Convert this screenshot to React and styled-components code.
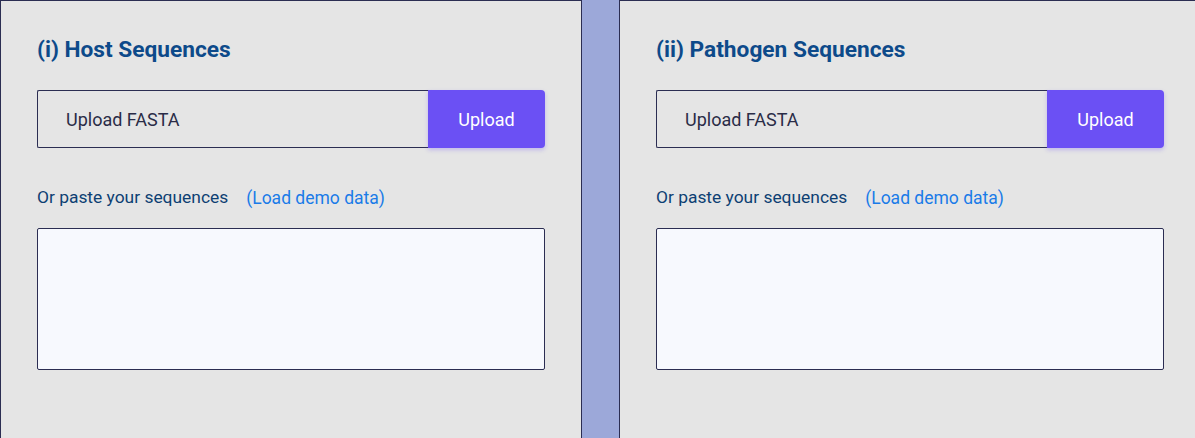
import React from "react";
import styled, { createGlobalStyle } from "styled-components";

const GlobalStyle = createGlobalStyle`
  html, body {
    margin: 0;
    padding: 0;
    overflow: hidden;
    background: #9ca8d9;
    font-family: Roboto, "Liberation Sans", sans-serif;
  }
`;

const Page = styled.div`
  display: flex;
  gap: 37px;
  width: 1240px;
`;

const Panel = styled.section`
  box-sizing: border-box;
  width: 582px;
  height: 480px;
  flex-shrink: 0;
  background: #e5e5e5;
  border: 1px solid #2b2d52;
  padding: 29px 36px 0 36px;
`;

const Title = styled.h2`
  margin: 0 0 20px;
  font-size: 22.7px;
  font-weight: 700;
  line-height: 40px;
  color: #0d4a8a;
`;

const UploadRow = styled.div`
  display: flex;
  height: 58px;
`;

const FileField = styled.div`
  flex: 1;
  display: flex;
  align-items: center;
  box-sizing: border-box;
  border: 1px solid #2b2d52;
  border-right: none;
  border-radius: 2px 0 0 2px;
  padding-left: 28px;
  font-size: 18px;
  color: #2a2c47;
`;

const UploadButton = styled.button`
  width: 117px;
  border: none;
  border-radius: 0 4px 4px 0;
  background: #6b50f4;
  color: #ffffff;
  font-family: inherit;
  font-size: 18px;
  box-shadow: 0 2px 4px rgba(107, 80, 244, 0.3);
  cursor: pointer;
`;

const PasteRow = styled.div`
  display: flex;
  align-items: baseline;
  gap: 18px;
  margin: 37px 0 19px;
  font-size: 17.4px;
  line-height: 24px;
`;

const PasteLabel = styled.span`
  color: #0d3f73;
`;

const DemoLink = styled.a`
  color: #1a7be8;
  font-size: 17.5px;
  position: relative;
  top: 1px;
  cursor: pointer;
`;

const SeqArea = styled.textarea`
  display: block;
  box-sizing: border-box;
  width: 100%;
  height: 142px;
  margin: 0;
  background: #f7f9fe;
  border: 1px solid #2b2d52;
  border-radius: 2px;
  resize: none;
`;

const SequencePanel = ({ title }) => (
  <Panel>
    <Title>{title}</Title>
    <UploadRow>
      <FileField>Upload FASTA</FileField>
      <UploadButton>Upload</UploadButton>
    </UploadRow>
    <PasteRow>
      <PasteLabel>Or paste your sequences</PasteLabel>
      <DemoLink>(Load demo data)</DemoLink>
    </PasteRow>
    <SeqArea />
  </Panel>
);

export default function App() {
  return (
    <>
      <GlobalStyle />
      <Page>
        <SequencePanel title="(i) Host Sequences" />
        <SequencePanel title="(ii) Pathogen Sequences" />
      </Page>
    </>
  );
}
